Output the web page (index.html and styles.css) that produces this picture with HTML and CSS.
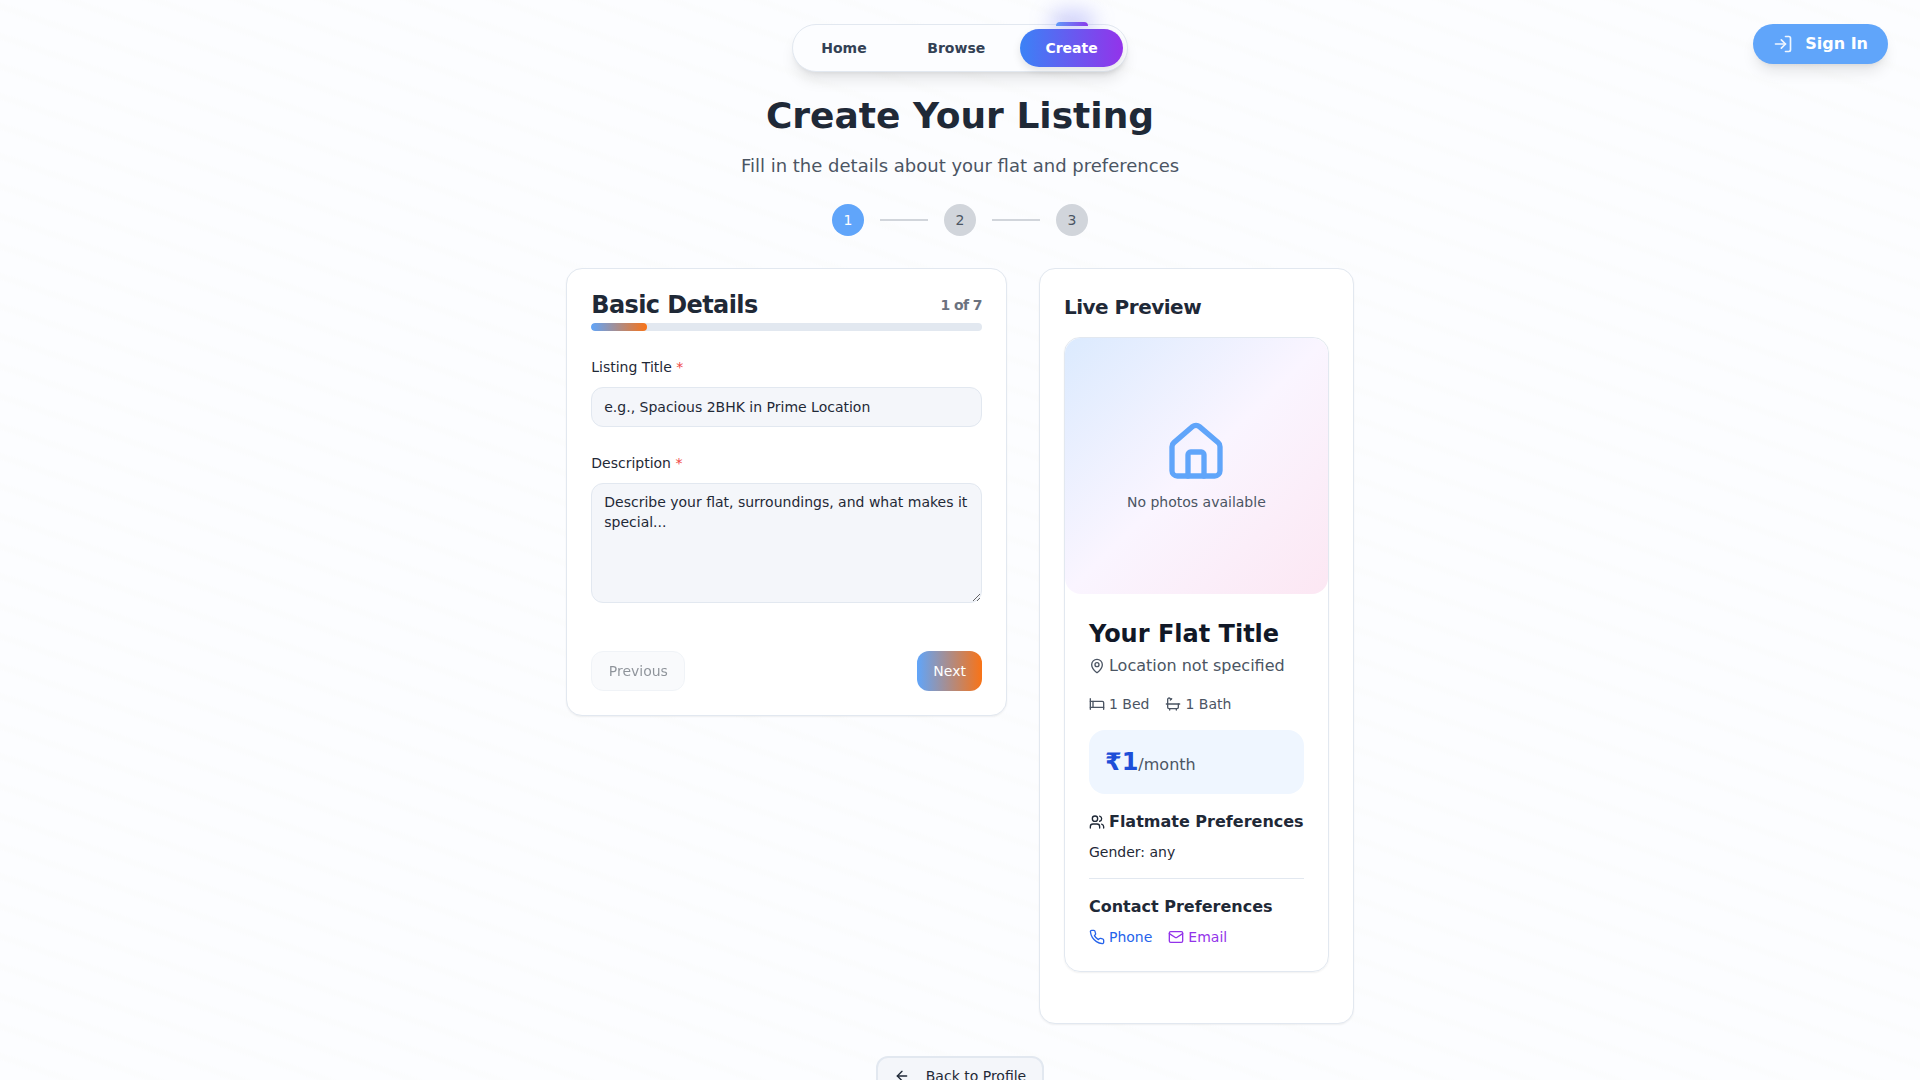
FILE: index.html
```html
<!DOCTYPE html>
<html lang="en">
<head>
<meta charset="utf-8">
<title>Create Your Listing</title>
<link rel="stylesheet" href="styles.css">
</head>
<body>
<header class="topbar">
  <span></span>
  <nav class="nav">
    <a class="nav-link home">Home</a>
    <a class="nav-link browse">Browse</a>
    <a class="nav-link active">Create<span class="lamp"></span></a>
  </nav>
  <a class="signin">
    <svg class="icon-20" viewBox="0 0 24 24"><path d="M15 3h4a2 2 0 0 1 2 2v14a2 2 0 0 1-2 2h-4"/><path d="m10 17 5-5-5-5"/><path d="M15 12H3"/></svg>
    <span>Sign In</span>
  </a>
</header>
<main class="page">
  <h1 class="title">Create Your Listing</h1>
  <p class="subtitle">Fill in the details about your flat and preferences</p>
  <div class="steps">
    <span class="step current">1</span><span class="step-line"></span><span class="step">2</span><span class="step-line"></span><span class="step">3</span>
  </div>
  <div class="columns">
    <section class="card">
      <div class="form-head"><h2>Basic Details</h2><span class="count">1 of 7</span></div>
      <div class="progress"><div class="progress-fill"></div></div>
      <label class="label" for="title">Listing Title <span class="req">*</span></label>
      <input class="field" id="title" placeholder="e.g., Spacious 2BHK in Prime Location">
      <label class="label" for="desc">Description <span class="req">*</span></label>
      <textarea class="field area" id="desc" placeholder="Describe your flat, surroundings, and what makes it special..."></textarea>
      <div class="actions"><button class="btn prev" disabled>Previous</button><button class="btn next">Next</button></div>
    </section>
    <section class="card preview">
      <h3>Live Preview</h3>
      <article class="listing">
        <div class="photo">
          <svg class="icon-64" viewBox="0 0 24 24"><path d="M15 21v-8a1 1 0 0 0-1-1h-4a1 1 0 0 0-1 1v8"/><path d="M3 10a2 2 0 0 1 .709-1.528l7-5.999a2 2 0 0 1 2.582 0l7 5.999A2 2 0 0 1 21 10v9a2 2 0 0 1-2 2H5a2 2 0 0 1-2-2z"/></svg>
          <p>No photos available</p>
        </div>
        <div class="body">
          <h4 class="flat-title">Your Flat Title</h4>
          <div class="row location">
            <svg class="icon-16" viewBox="0 0 24 24"><path d="M20 10c0 4.993-5.539 10.193-7.399 11.799a1 1 0 0 1-1.202 0C9.539 20.193 4 14.993 4 10a8 8 0 0 1 16 0"/><circle cx="12" cy="10" r="3"/></svg>
            <span>Location not specified</span>
          </div>
          <div class="facts">
            <div class="row"><svg class="icon-16" viewBox="0 0 24 24"><path d="M2 4v16"/><path d="M2 8h18a2 2 0 0 1 2 2v10"/><path d="M2 17h20"/><path d="M6 8v9"/></svg><span>1 Bed</span></div>
            <div class="row"><svg class="icon-16" viewBox="0 0 24 24"><path d="M10 4 8 6"/><path d="M17 19v2"/><path d="M2 12h20"/><path d="M7 19v2"/><path d="M9 5 7.621 3.621A2.121 2.121 0 0 0 4 5v12a2 2 0 0 0 2 2h12a2 2 0 0 0 2-2v-5"/></svg><span>1 Bath</span></div>
          </div>
          <div class="price"><span class="amount">₹1</span><span>/month</span></div>
          <h5 class="row sub"><svg class="icon-16" viewBox="0 0 24 24"><path d="M16 21v-2a4 4 0 0 0-4-4H6a4 4 0 0 0-4 4v2"/><circle cx="9" cy="7" r="4"/><path d="M22 21v-2a4 4 0 0 0-3-3.87"/><path d="M16 3.13a4 4 0 0 1 0 7.75"/></svg><span>Flatmate Preferences</span></h5>
          <p class="gender">Gender: any</p>
          <div class="contact">
            <h5 class="sub">Contact Preferences</h5>
            <div class="methods">
              <div class="row phone"><svg class="icon-16" viewBox="0 0 24 24"><path d="M22 16.92v3a2 2 0 0 1-2.18 2 19.79 19.79 0 0 1-8.63-3.07 19.5 19.5 0 0 1-6-6 19.79 19.79 0 0 1-3.07-8.67A2 2 0 0 1 4.11 2h3a2 2 0 0 1 2 1.72 12.84 12.84 0 0 0 .7 2.81 2 2 0 0 1-.45 2.11L8.09 9.91a16 16 0 0 0 6 6l1.27-1.27a2 2 0 0 1 2.11-.45 12.84 12.84 0 0 0 2.81.7A2 2 0 0 1 22 16.92z"/></svg><span>Phone</span></div>
              <div class="row email"><svg class="icon-16" viewBox="0 0 24 24"><rect width="20" height="16" x="2" y="4" rx="2"/><path d="m22 7-8.97 5.7a1.94 1.94 0 0 1-2.06 0L2 7"/></svg><span>Email</span></div>
            </div>
          </div>
        </div>
      </article>
    </section>
  </div>
  <a class="back"><svg class="icon-16" viewBox="0 0 24 24"><path d="m12 19-7-7 7-7"/><path d="M19 12H5"/></svg><span>Back to Profile</span></a>
</main>
</body>
</html>
```

FILE: styles.css
```css
*, *::before, *::after { box-sizing: border-box; }
html { height: 100%; overflow: hidden; }
body {
  margin: 0;
  height: 100%;
  overflow: hidden;
  color: #1f2937;
  font: 14px/20px "DejaVu Sans", sans-serif;
  background-color: #fcfdff;
  background-image: linear-gradient(to bottom left, #fbfcfd 0 3%, transparent 8% 42%, #fbfcfd 47% 53%, transparent 58% 92%, #fbfcfd 97%);
  background-size: 86px 30px;
  background-position: 0 6px;
}
h1, h2, h3, h4, h5, p { margin: 0; }
svg { fill: none; stroke: currentColor; stroke-width: 2; stroke-linecap: round; stroke-linejoin: round; flex: none; display: block; }
.icon-16 { width: 16px; height: 16px; }
.icon-20 { width: 20px; height: 20px; opacity: .9; }
.icon-64 { width: 64px; height: 64px; color: #60a5fa; }

.topbar { display: grid; grid-template-columns: 1fr auto 1fr; align-items: start; padding: 24px 32px 0; height: 96px; }
.nav {
  display: flex; align-items: center; width: 336px; height: 48px; padding: 0 4px;
  border: 1px solid #e2e8f0; border-radius: 24px; background: #fcfdff;
  box-shadow: 0 10px 15px -3px rgba(0,0,0,.1), 0 4px 6px -4px rgba(0,0,0,.1);
}
.nav-link { position: relative; font-weight: 600; color: #334155; display: flex; align-items: center; justify-content: center; height: 38px; }
.home { width: 94px; }
.browse { width: 106px; margin: 0 11px 0 12.5px; }
.active { width: 103px; border-radius: 19px; color: #fff; background: linear-gradient(to right, #3b82f6, #9333ea); box-shadow: 0 4px 8px rgba(0,0,0,.1); }
.lamp { position: absolute; top: -7px; left: 35.5px; width: 32px; height: 4px; border-radius: 4px 4px 0 0; background: linear-gradient(to right, #60a5fa, #9333ea); }
.lamp::before { content: ""; position: absolute; left: -8px; top: -12px; width: 48px; height: 24px; border-radius: 50%; background: rgba(99,102,241,.3); filter: blur(10px); clip-path: inset(-30px -30px 5px -30px); }
.signin {
  justify-self: end; display: flex; align-items: center; gap: 12px; height: 40px; padding: 0 20px;
  border-radius: 20px; background: #60a5fa; color: #fff; font-size: 16px; font-weight: 600;
  box-shadow: 0 10px 15px -3px rgba(0,0,0,.1), 0 4px 6px -4px rgba(0,0,0,.1);
}

.page { width: 787.5px; margin: 0 auto; display: flex; flex-direction: column; align-items: center; }
.title { font-size: 36px; line-height: 40px; font-weight: 700; }
.subtitle { margin-top: 16px; font-size: 18px; line-height: 28px; color: #4b5563; }
.steps { display: flex; align-items: center; gap: 16px; margin: 24px 0 32px; }
.step { width: 32px; height: 32px; border-radius: 50%; background: #d1d5db; color: #4b5563; display: grid; place-items: center; }
.step.current { background: #60a5fa; color: #fff; }
.step-line { width: 48px; height: 2px; background: #d1d5db; }

.columns { display: grid; grid-template-columns: 7fr 5fr; gap: 32px; width: 100%; align-items: start; }
.card { min-width: 0; padding: 24px; background: #fff; border: 1px solid #e2e8f0; border-radius: 16px; box-shadow: 0 1px 2px rgba(0,0,0,.06); }
.form-head { display: flex; justify-content: space-between; align-items: center; height: 24px; letter-spacing: -.6px; }
.form-head h2 { font-size: 24px; line-height: 24px; font-weight: 600; }
.count { font-weight: 600; color: #6b7280; }
.progress { height: 8px; margin: 6px 0 28px; background: #e2e8f0; border-radius: 4px; overflow: hidden; }
.progress-fill { width: calc(100% / 7); height: 100%; border-radius: 4px; background: linear-gradient(to right, #60a5fa, #f97316); }
.label { display: block; line-height: 16px; margin-bottom: 12px; }
.req { color: #ef4444; }
.field { display: block; width: 100%; height: 40px; margin: 0 0 28px; padding: 8px 12px; border: 1px solid #e2e8f0; border-radius: 12px; background: #f4f6fa; font: inherit; color: inherit; outline: 0; }
.field::placeholder { color: #1f2937; opacity: 1; }
.area { height: 120px; margin-bottom: 48px; resize: vertical; }
.actions { display: flex; justify-content: space-between; }
.btn { height: 40px; padding: 0 16px; border: 0; border-radius: 12px; font: inherit; }
.prev { padding: 0 16.5px; border: 1px solid #e2e8f0; background: #f4f6fa; color: #1f2937; opacity: .5; }
.next { color: #fff; background: linear-gradient(to right, #60a5fa, #f97316); }

.preview { height: 756px; }
.preview h3 { font-size: 20px; line-height: 28px; font-weight: 600; letter-spacing: -.5px; margin-bottom: 16px; }
.listing { border: 1px solid #e2e8f0; border-radius: 16px; box-shadow: 0 1px 2px rgba(0,0,0,.06); }
.photo { height: 256px; display: flex; flex-direction: column; align-items: center; justify-content: center; gap: 8px; border-radius: 16px; color: #4b5563; background: linear-gradient(to bottom right, #dbeafe, #faf5ff, #fce7f3); }
.body { padding: 24px; }
.row { display: flex; align-items: center; gap: 4px; white-space: nowrap; }
.flat-title { font-size: 24px; line-height: 32px; font-weight: 700; color: #111827; }
.location { margin-top: 4px; font-size: 16px; line-height: 24px; color: #4b5563; }
.facts { display: flex; gap: 16px; margin: 16px 0; color: #4b5563; }
.price { height: 64px; padding: 16px; border-radius: 16px; background: #eff6ff; font-size: 16px; line-height: 32px; color: #4b5563; }
.amount { font-size: 24px; font-weight: 700; color: #1d4ed8; }
.sub { font-size: 16px; line-height: 24px; font-weight: 600; margin-bottom: 8px; }
.price + .sub { margin-top: 16px; }
.contact { margin-top: 16px; padding-top: 16px; border-top: 1px solid #e2e8f0; }
.methods { display: flex; gap: 16px; }
.phone { color: #2563eb; }
.email { color: #9333ea; }
.back { display: flex; align-items: center; gap: 16px; height: 40px; flex: none; margin-top: 32px; padding: 0 16px; border: 2px solid #e2e8f0; border-radius: 12px; background: #f4f6fa; }
```
